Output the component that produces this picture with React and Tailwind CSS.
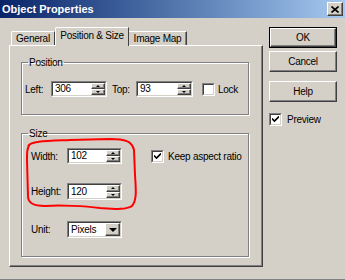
import React from 'react';

const raised = 'border border-t-white border-l-white border-b-[#404040] border-r-[#404040] bg-[#d4d0c8]';

const Spin = () => (
  <div className="flex flex-col w-[14px] h-full">
    <div className={`${raised} flex-1 flex items-center justify-center shadow-[inset_-1px_-1px_0_#808080]`}>
      <div className="w-0 h-0 border-l-[2px] border-r-[2px] border-b-[2px] border-l-transparent border-r-transparent border-b-black" />
    </div>
    <div className={`${raised} flex-1 flex items-center justify-center shadow-[inset_-1px_-1px_0_#808080]`}>
      <div className="w-0 h-0 border-l-[2px] border-r-[2px] border-t-[2px] border-l-transparent border-r-transparent border-t-black" />
    </div>
  </div>
);

const Field = ({ value, className, combo }) => (
  <div className={`border border-t-[#808080] border-l-[#808080] border-b-white border-r-white ${className}`}>
    <div className="h-full border border-t-[#404040] border-l-[#404040] border-b-[#d4d0c8] border-r-[#d4d0c8] bg-white flex items-stretch">
      <span className="flex-1 pl-[2px] flex items-center leading-none">{value}</span>
      {combo ? (
        <div className={`${raised} w-[15px] flex items-center justify-center shadow-[inset_-1px_-1px_0_#808080]`}>
          <div className="w-0 h-0 border-l-[4px] border-r-[4px] border-t-[4px] border-l-transparent border-r-transparent border-t-black" />
        </div>
      ) : (
        <Spin />
      )}
    </div>
  </div>
);

const Check = ({ checked }) => (
  <div className="w-[13px] h-[13px] border border-t-[#808080] border-l-[#808080] border-b-white border-r-white shrink-0">
    <div className="w-full h-full border border-t-[#404040] border-l-[#404040] border-b-[#d4d0c8] border-r-[#d4d0c8] bg-white flex items-center justify-center">
      {checked && (
        <svg width="7" height="7" viewBox="0 0 7 7">
          <path d="M0 2.5 L2.5 5 L7 0.5" stroke="black" strokeWidth="1.6" fill="none" />
        </svg>
      )}
    </div>
  </div>
);

const Button = ({ children, def, className }) => (
  <div className={`w-[68px] h-[21px] ${def ? 'border border-black' : ''} ${className || ''}`}>
    <div className={`${raised} h-full flex items-center justify-center shadow-[inset_-1px_-1px_0_#808080]`}>
      {children}
    </div>
  </div>
);

const Group = ({ title, className, children }) => (
  <fieldset className={`border border-[#808080] shadow-[inset_1px_1px_0_#fff,1px_1px_0_#fff] w-[228px] ml-[11px] ${className}`}>
    <legend className="ml-[6px] px-[1px] leading-[13px]">{title}</legend>
    {children}
  </fieldset>
);

export default function App() {
  return (
    <div className="w-[345px] h-[280px] bg-[#d4d0c8] border-b border-[#808080] relative overflow-hidden text-[10px] tracking-[-0.25px] whitespace-nowrap text-black font-['Liberation_Sans',Arial,sans-serif]">
      {/* title bar */}
      <div className="h-[18px] flex items-center justify-between pl-[2px] pr-[2px] bg-gradient-to-r from-[#0a246a] to-[#a6caf0]">
        <span className="text-white font-bold text-[11px] tracking-normal">Object Properties</span>
        <div className={`${raised} w-[16px] h-[14px] flex items-center justify-center shadow-[inset_-1px_-1px_0_#808080]`}>
          <svg width="8" height="7" viewBox="0 0 8 7">
            <path d="M0.5 0.5 L7.5 6.5 M7.5 0.5 L0.5 6.5" stroke="black" strokeWidth="1.6" />
          </svg>
        </div>
      </div>

      <div className="flex pl-[9px] pt-[9px]">
        {/* left: tabs + panel */}
        <div className="w-[254px]">
          <div className="flex items-end h-[18px] pl-[2px]">
            <div className="w-[44px] h-[14px] border-l border-t border-r border-l-white border-t-white border-r-[#404040] rounded-tl-[2px] flex items-center justify-center">General</div>
            <div className="relative z-10 mb-[-1px] w-[74px] h-[19px] bg-[#d4d0c8] border-l border-t border-r border-l-white border-t-white border-r-[#404040] rounded-tl-[2px] flex items-center justify-center pb-[3px]">Position &amp; Size</div>
            <div className="w-[58px] h-[14px] border-t border-r border-t-white border-r-[#404040] shadow-[inset_-1px_0_0_#808080] flex items-center justify-center">Image Map</div>
          </div>
          <div className="h-[222px] border border-t-white border-l-white border-b-[#404040] border-r-[#404040] shadow-[inset_-1px_-1px_0_#808080] pt-[10px]">
            <Group title="Position">
              <div className="flex items-center mt-[12px] mb-[17px] pl-[3px] h-[16px]">
                <span className="w-[26px]">Left:</span>
                <Field value="306" className="w-[56px] h-[16px]" />
                <span className="w-[24px] ml-[5px]">Top:</span>
                <Field value="93" className="w-[57px] h-[16px]" />
                <div className="ml-[9px]"><Check /></div>
                <span className="ml-[3px]">Lock</span>
              </div>
            </Group>
            <Group title="Size" className="mt-[12px]">
              <div className="pl-[9px] pb-[18px]">
                <div className="flex items-center mt-[8px] h-[16px]">
                  <span className="w-[36px]">Width:</span>
                  <Field value="102" className="w-[55px] h-[16px]" />
                  <div className="ml-[29px]"><Check checked /></div>
                  <span className="ml-[4px]">Keep aspect ratio</span>
                </div>
                <div className="flex items-center mt-[19px] h-[17px]">
                  <span className="w-[36px]">Height:</span>
                  <Field value="120" className="w-[55px] h-[17px]" />
                </div>
                <div className="flex items-center mt-[21px] h-[17px]">
                  <span className="w-[36px]">Unit:</span>
                  <Field value="Pixels" combo className="w-[55px] h-[17px]" />
                </div>
              </div>
            </Group>
          </div>
        </div>

        {/* right: buttons */}
        <div className="ml-[6px] flex flex-col">
          <Button def>OK</Button>
          <Button className="mt-[3px]">Cancel</Button>
          <Button className="mt-[9px]">Help</Button>
          <div className="flex items-center mt-[10px]">
            <Check checked />
            <span className="ml-[5px]">Preview</span>
          </div>
        </div>
      </div>

      {/* red hand-drawn annotation */}
      <svg className="absolute left-0 top-0 pointer-events-none" width="345" height="280" viewBox="0 0 345 280">
        <path
          d="M28 146 C31 141 46 141 70 140 L110 139 C125 139 132 141 134 150 L135 175 C136 190 137 200 132 206 C126 210 115 209 100 208 C85 206 60 205 45 206 C33 206 28 203 28 196 L27 160 C27 152 27 148 30 144"
          stroke="#ff0000"
          strokeWidth="2"
          fill="none"
          strokeLinejoin="round"
        />
      </svg>
    </div>
  );
}
